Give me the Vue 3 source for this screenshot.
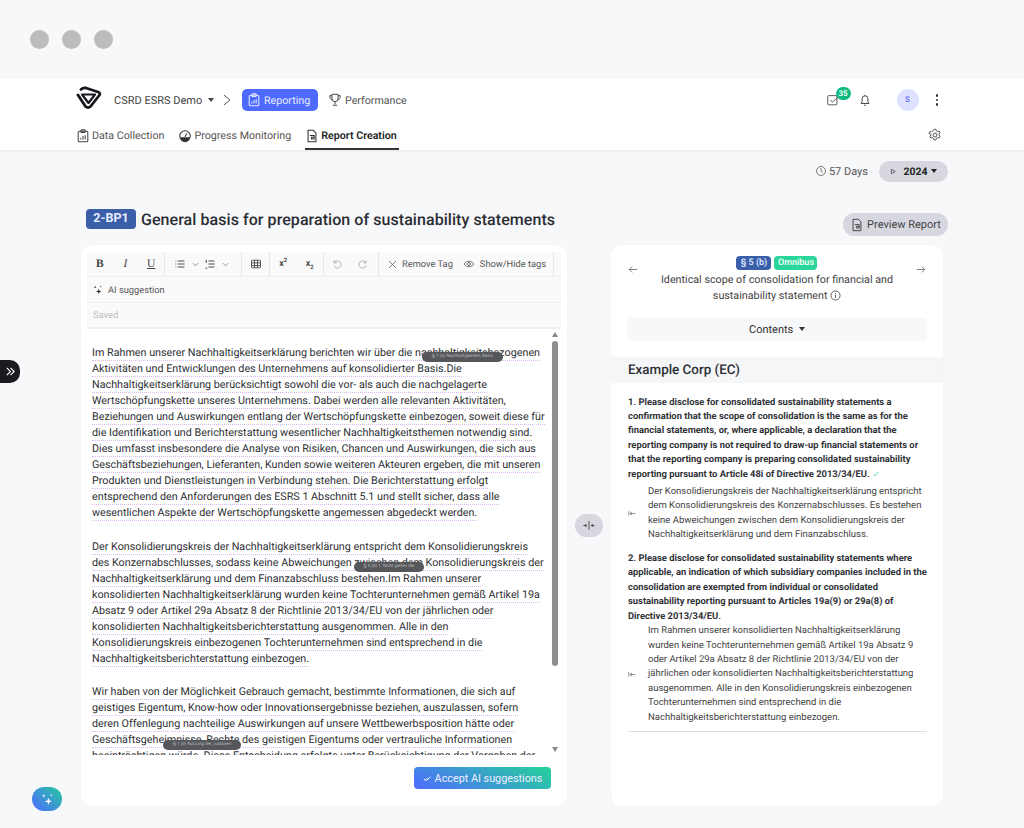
<template>
  <div class="page">
    <div class="window-bar">
      <span class="dot"></span><span class="dot"></span><span class="dot"></span>
    </div>

    <header class="header">
      <div class="nav-top">
        <svg class="logo" viewBox="0 0 26 23" fill="none" stroke="#16181d" stroke-width="2.800" stroke-linejoin="round" stroke-linecap="round">
          <path d="M2 9 L9.500 20.500 Q12 22.500 14.500 20.500 L23.500 9 Q24.500 7 22 6 L10 2 Q7 1.500 5 3.500" />
          <path d="M6 8.500 H19 L12.500 17 Z" stroke-width="2.200" />
        </svg>
        <span class="project">CSRD ESRS Demo <i class="caret"></i></span>
        <svg class="crumb" viewBox="0 0 10 14" fill="none" stroke="#555" stroke-width="1"><path d="M2 2l6 5-6 5" /></svg>
        <span class="tab-active">
          <svg class="ico" viewBox="0 0 16 16" fill="none" stroke="currentColor" stroke-width="1.200"><rect x="2.500" y="2.500" width="11" height="12" rx="1.500" /><rect x="5.500" y="1" width="5" height="3" rx="1" /><path d="M5.500 12V10M8 12V8M10.500 12V7" /></svg>
          Reporting
        </span>
        <span class="tab-plain">
          <svg class="ico" viewBox="0 0 16 16" fill="none" stroke="#444" stroke-width="1.100"><path d="M4.500 1.500h7v5a3.500 3.500 0 0 1-7 0zM8 10v3M5.500 14h5M4.500 3H2c0 3 1 4.500 2.800 5M11.500 3H14c0 3-1 4.500-2.800 5" /></svg>
          Performance
        </span>
        <div class="nav-right">
          <span class="tasks">
            <svg class="ico" viewBox="0 0 16 16" fill="none" stroke="#555" stroke-width="1.100"><rect x="2" y="3" width="10.500" height="10.500" rx="1" /><path d="M5 8l2.500 2.500L14 4" /></svg>
            <b class="count">35</b>
          </span>
          <svg class="ico bell" viewBox="0 0 16 16" fill="none" stroke="#444" stroke-width="1.100"><path d="M3.500 12h9l-1.200-2V6.500a3.300 3.300 0 0 0-6.600 0V10zM7 14h2M8 2v1" /></svg>
          <span class="avatar">S</span>
          <span class="kebab"><i></i><i></i><i></i></span>
        </div>
      </div>
      <div class="nav-sub">
        <span class="sub-item">
          <svg class="ico" viewBox="0 0 16 16" fill="none" stroke="#444" stroke-width="1.200"><rect x="2.500" y="2.500" width="11" height="12" rx="1.500" /><rect x="5.500" y="1" width="5" height="3" rx="1" /><path d="M5.500 12V10M8 12V8M10.500 12V7" /></svg>
          Data Collection
        </span>
        <span class="sub-item">
          <svg class="ico" viewBox="0 0 16 16"><circle cx="8" cy="8" r="6" fill="none" stroke="#333" stroke-width="1.200" /><path d="M2.500 9.500h11a5.500 5.500 0 0 1-11 0z" fill="#333" /><path d="M8 9L10 5" stroke="#333" stroke-width="1.200" /></svg>
          Progress Monitoring
        </span>
        <span class="sub-item current">
          <svg class="ico" viewBox="0 0 16 16" fill="none" stroke="#333" stroke-width="1.200"><path d="M3.500 1.500h6l3 3v10h-9zM5.500 7.500h5v4h-3v-2h3" /></svg>
          Report Creation
        </span>
        <svg class="ico gear" viewBox="0 0 16 16" fill="none" stroke="#555" stroke-width="1.100"><circle cx="8" cy="8" r="2.200" /><path d="M6.800 1.500h2.400l.4 1.800 1.400.8 1.800-.6 1.200 2.100-1.400 1.200v1.400l1.400 1.200-1.200 2.100-1.800-.6-1.400.8-.4 1.800H6.800l-.4-1.800-1.400-.8-1.800.6-1.200-2.100 1.400-1.200V7.200L1 6l1.200-2.100 1.800.6 1.400-.8z" /></svg>
      </div>
    </header>

    <main class="main">
      <div class="status-row">
        <svg class="ico clock" viewBox="0 0 16 16" fill="none" stroke="#555" stroke-width="1"><circle cx="8" cy="8" r="6" /><path d="M8 4v4l2.500 2" /></svg>
        <span class="days">57 Days</span>
        <span class="year-chip">
          <svg class="play" viewBox="0 0 8 8" fill="none" stroke="#555"><path d="M1.500 1.500v5l4.500-2.500z" /></svg>
          <b>2024</b><i class="caret"></i>
        </span>
      </div>

      <div class="title-row">
        <span class="code">2-BP1</span>
        <h1>General basis for preparation of sustainability statements</h1>
        <span class="preview">
          <svg class="ico" viewBox="0 0 16 16" fill="none" stroke="#444" stroke-width="1.100"><path d="M3.500 1.500h6l3 3v10h-9zM5.500 7.500h5v4h-3v-2h3" /></svg>
          Preview Report
        </span>
      </div>

      <div class="columns">
        <section class="editor">
          <div class="toolbar">
            <div class="tool-row">
              <span class="group g-format">
                <b class="cell serif">B</b><i class="cell serif">I</i><u class="cell serif">U</u>
              </span>
              <span class="group g-lists">
                <svg class="tool" viewBox="0 0 16 16" fill="none" stroke="#444" stroke-width="1.300"><path d="M5 4h9M5 8h9M5 12h9M2 4h1M2 8h1M2 12h1" /></svg>
                <svg class="chev" viewBox="0 0 8 8" fill="none" stroke="#888"><path d="M1 2.500l3 3 3-3" /></svg>
                <svg class="tool" viewBox="0 0 16 16" fill="none" stroke="#444" stroke-width="1.300"><path d="M6 4h8M6 8h8M6 12h8M3 2.500v4M2 13.500h2.500" /></svg>
                <svg class="chev" viewBox="0 0 8 8" fill="none" stroke="#888"><path d="M1 2.500l3 3 3-3" /></svg>
              </span>
              <span class="group g-table">
                <svg class="tool" viewBox="0 0 16 16" fill="none" stroke="#444" stroke-width="1.200"><rect x="2" y="3" width="12" height="10" rx="1" /><path d="M2 6.500h12M2 10h12M6 3v10M10 3v10" /></svg>
              </span>
              <span class="group g-scripts">
                <span class="sc">x<sup>2</sup></span><span class="sc">x<sub>2</sub></span>
              </span>
              <span class="group g-history">
                <span class="cell"><svg class="tool" viewBox="0 0 16 16" fill="none" stroke="#aaa" stroke-width="1.200"><path d="M4 3v3.500h3.500M4.300 6.500A4.800 4.800 0 1 1 4 10" /></svg></span>
                <span class="cell"><svg class="tool" viewBox="0 0 16 16" fill="none" stroke="#aaa" stroke-width="1.200"><path d="M12 3v3.500H8.500M11.700 6.500A4.800 4.800 0 1 0 12 10" /></svg></span>
              </span>
              <span class="group g-tags">
                <svg class="small" viewBox="0 0 12 12" fill="none" stroke="#555" stroke-width="1"><path d="M1.500 1.500l9 9M10.500 1.500l-9 9" /></svg>
                <span class="tool-text">Remove Tag</span>
                <svg class="tool eye" viewBox="0 0 16 16" fill="none" stroke="#555" stroke-width="1.100"><path d="M1.500 8c3.500-5 9.500-5 13 0-3.500 5-9.500 5-13 0z" /><circle cx="8" cy="8" r="2" /></svg>
                <span class="tool-text">Show/Hide tags</span>
              </span>
            </div>
            <div class="ai-row">
              <svg class="spark" viewBox="0 0 14 14" fill="#333"><path d="M8 5l1 3 3 1-3 1-1 3-1-3-3-1 3-1zM3 1l.6 1.600 1.400.4-1.400.6L3 5l-.6-1.400L1 3l1.400-.4zM11 1l.4 1 1 .4-1 .4-.4 1-.4-1-1-.4 1-.4z" /></svg>
              AI suggestion
            </div>
            <div class="saved-row">Saved</div>
          </div>

          <div class="text-area">
            <p v-for="(para, i) in paragraphs" :key="i" class="para">
              <span v-for="(line, j) in para" :key="j" class="line">{{ line }}</span>
            </p>
            <span class="tag tag-a">§ 1 (a) Nachhaltigkeiten, Basis</span>
            <span class="tag tag-b">§ 5 (b) 1. Nicht gelten die</span>
            <span class="tag tag-c">§ 1 (d) Nutzung der, zulassen</span>
            <div class="scrollbar">
              <i class="arrow-up"></i>
              <span class="thumb"></span>
              <i class="arrow-down"></i>
            </div>
          </div>

          <div class="editor-foot">
            <button class="accept">
              <svg viewBox="0 0 12 12" fill="none" stroke="#fff" stroke-width="1.300"><path d="M1 6.500l2 2 2.500-3M5 8.500l5-5" /></svg>
              Accept AI suggestions
            </button>
          </div>
        </section>

        <div class="splitter">
          <span class="split-btn">
            <svg viewBox="0 0 16 12" fill="none" stroke="#444" stroke-width="1"><path d="M8 1v10M1.500 6H5M3.500 4.500L5.500 6l-2 1.500M14.500 6H11M12.500 4.500L10.500 6l2 1.500" /></svg>
          </span>
        </div>

        <section class="panel">
          <div class="panel-head">
            <svg class="arrow" viewBox="0 0 12 10" fill="none" stroke="#666"><path d="M11 5H1.500M5 1.500L1.500 5 5 8.500" /></svg>
            <div class="head-mid">
              <div class="badges"><span class="b-blue">§ 5 (b)</span><span class="b-green">Omnibus</span></div>
              <p class="head-title">Identical scope of consolidation for financial and<br>sustainability statement
                <svg class="info" viewBox="0 0 12 12" fill="none" stroke="#444" stroke-width=".9"><circle cx="6" cy="6" r="5" /><path d="M6 5.200v3.600M6 3.200v1" /></svg>
              </p>
            </div>
            <svg class="arrow" viewBox="0 0 12 10" fill="none" stroke="#666"><path d="M1 5h9.500M7 1.500L10.500 5 7 8.500" /></svg>
          </div>
          <div class="contents">Contents <i class="caret"></i></div>
          <h2 class="company">Example Corp (EC)</h2>
          <div class="items">
            <p class="q">1. Please disclose for consolidated sustainability statements a confirmation that the scope of consolidation is the same as for the financial statements, or, where applicable, a declaration that the reporting company is not required to draw-up financial statements or that the reporting company is preparing consolidated sustainability reporting pursuant to Article 48i of Directive 2013/34/EU.
              <svg class="tick" viewBox="0 0 10 10" fill="none" stroke="#2fd39a"><path d="M2 5.500l2 2 4-5" /></svg>
            </p>
            <div class="answer first">
              <svg class="pull" viewBox="0 0 10 8" fill="none" stroke="#555" stroke-width=".8"><path d="M1 1v6M9 4H2.500M5 2L2.500 4 5 6" /></svg>
              <p>Der Konsolidierungskreis der Nachhaltigkeitserklärung entspricht dem Konsolidierungskreis des Konzernabschlusses. Es bestehen keine Abweichungen zwischen dem Konsolidierungskreis der Nachhaltigkeitserklärung und dem Finanzabschluss.</p>
            </div>
            <p class="q second">2. Please disclose for consolidated sustainability statements where applicable, an indication of which subsidiary companies included in the consolidation are exempted from individual or consolidated sustainability reporting pursuant to Articles 19a(9) or 29a(8) of Directive 2013/34/EU.</p>
            <div class="answer">
              <svg class="pull" viewBox="0 0 10 8" fill="none" stroke="#555" stroke-width=".8"><path d="M1 1v6M9 4H2.500M5 2L2.500 4 5 6" /></svg>
              <p>Im Rahmen unserer konsolidierten Nachhaltigkeitserklärung wurden keine Tochterunternehmen gemäß Artikel 19a Absatz 9 oder Artikel 29a Absatz 8 der Richtlinie 2013/34/EU von der jährlichen oder konsolidierten Nachhaltigkeitsberichterstattung ausgenommen. Alle in den Konsolidierungskreis einbezogenen Tochterunternehmen sind entsprechend in die Nachhaltigkeitsberichterstattung einbezogen.</p>
            </div>
            <hr class="rule" />
          </div>
        </section>
      </div>
    </main>

    <span class="side-tab">
      <svg viewBox="0 0 12 12" fill="none" stroke="#fff" stroke-width="1.200"><path d="M2 2l4 4-4 4M6 2l4 4-4 4" /></svg>
    </span>
    <span class="fab">
      <svg viewBox="0 0 14 14" fill="#fff"><path d="M8 5l1 3 3 1-3 1-1 3-1-3-3-1 3-1zM3 1l.6 1.600 1.400.4-1.400.6L3 5l-.6-1.400L1 3l1.400-.4zM11 1l.4 1 1 .4-1 .4-.4 1-.4-1-1-.4 1-.4z" /></svg>
    </span>
  </div>
</template>

<script setup>
const paragraphs = [
  [
    'Im Rahmen unserer Nachhaltigkeitserklärung berichten wir über die nachhaltigkeitsbezogenen',
    'Aktivitäten und Entwicklungen des Unternehmens auf konsolidierter Basis.Die',
    'Nachhaltigkeitserklärung berücksichtigt sowohl die vor- als auch die nachgelagerte',
    'Wertschöpfungskette unseres Unternehmens. Dabei werden alle relevanten Aktivitäten,',
    'Beziehungen und Auswirkungen entlang der Wertschöpfungskette einbezogen, soweit diese für',
    'die Identifikation und Berichterstattung wesentlicher Nachhaltigkeitsthemen notwendig sind.',
    'Dies umfasst insbesondere die Analyse von Risiken, Chancen und Auswirkungen, die sich aus',
    'Geschäftsbeziehungen, Lieferanten, Kunden sowie weiteren Akteuren ergeben, die mit unseren',
    'Produkten und Dienstleistungen in Verbindung stehen. Die Berichterstattung erfolgt',
    'entsprechend den Anforderungen des ESRS 1 Abschnitt 5.1 und stellt sicher, dass alle',
    'wesentlichen Aspekte der Wertschöpfungskette angemessen abgedeckt werden.'
  ],
  [
    'Der Konsolidierungskreis der Nachhaltigkeitserklärung entspricht dem Konsolidierungskreis',
    'des Konzernabschlusses, sodass keine Abweichungen zwischen dem Konsolidierungskreis der',
    'Nachhaltigkeitserklärung und dem Finanzabschluss bestehen.Im Rahmen unserer',
    'konsolidierten Nachhaltigkeitserklärung wurden keine Tochterunternehmen gemäß Artikel 19a',
    'Absatz 9 oder Artikel 29a Absatz 8 der Richtlinie 2013/34/EU von der jährlichen oder',
    'konsolidierten Nachhaltigkeitsberichterstattung ausgenommen. Alle in den',
    'Konsolidierungskreis einbezogenen Tochterunternehmen sind entsprechend in die',
    'Nachhaltigkeitsberichterstattung einbezogen.'
  ],
  [
    'Wir haben von der Möglichkeit Gebrauch gemacht, bestimmte Informationen, die sich auf',
    'geistiges Eigentum, Know-how oder Innovationsergebnisse beziehen, auszulassen, sofern',
    'deren Offenlegung nachteilige Auswirkungen auf unsere Wettbewerbsposition hätte oder',
    'Geschäftsgeheimnisse, Rechte des geistigen Eigentums oder vertrauliche Informationen',
    'beeinträchtigen würde. Diese Entscheidung erfolgte unter Berücksichtigung der Vorgaben der'
  ]
]
</script>

<style>
html, body { margin: 0; background: #f7f8fa; }
</style>

<style scoped>
.page {
  position: relative;
  width: 1024px;
  height: 828px;
  overflow: hidden;
  background: #f7f8fa;
  font-family: Roboto, "Liberation Sans", sans-serif;
  color: #33363b;
  text-rendering: geometricPrecision;
}
.window-bar {
  height: 78px;
  display: flex;
  align-items: center;
  gap: 13px;
  padding-left: 30px;
}
.dot { width: 19px; height: 19px; border-radius: 50%; background: #bdbdbd; }

.header {
  background: #fff;
  height: 72px;
  box-shadow: 0 1px 2px rgba(0, 0, 0, .07);
  padding: 0 76px;
  box-sizing: border-box;
}
.ico { width: 14px; height: 14px; flex: none; }
.caret {
  display: inline-block;
  width: 0;
  height: 0;
  border: 3.500px solid transparent;
  border-top: 4px solid currentColor;
  border-bottom: 0;
  vertical-align: 2px;
  margin-left: 3px;
}
.nav-top { display: flex; align-items: center; height: 44px; font-size: 10.700px; }
.logo { width: 26px; height: 23px; margin-top: -5px; flex: none; }
.project { margin-left: 12px; color: #444; font-size: 11px; }
.crumb { width: 10px; height: 14px; margin-left: 8px; }
.tab-active {
  margin-left: 10px;
  width: 76px;
  height: 22px;
  box-sizing: border-box;
  display: flex;
  align-items: center;
  gap: 3px;
  padding-left: 5px;
  background: #4f6bff;
  color: #e7ebff;
  border-radius: 5px;
}
.tab-plain { margin-left: 10px; display: flex; align-items: center; gap: 3px; color: #555; }
.nav-right { margin-left: auto; display: flex; align-items: center; margin-right: 10px; }
.tasks { position: relative; display: flex; margin-right: 18px; }
.count {
  position: absolute;
  left: 10px;
  top: -6px;
  width: 15px;
  height: 13px;
  border-radius: 7px;
  background: #10b981;
  color: #e8fff6;
  font-size: 8px;
  line-height: 13px;
  text-align: center;
}
.bell { margin-right: 25px; }
.avatar {
  width: 22px;
  height: 22px;
  border-radius: 50%;
  background: #dfe2ff;
  color: #5a6cff;
  font-size: 8px;
  font-weight: 500;
  line-height: 22px;
  text-align: center;
}
.kebab { display: flex; flex-direction: column; gap: 2px; margin-left: 17px; }
.kebab i { width: 2.500px; height: 2.500px; border-radius: 50%; background: #333; }

.nav-sub { display: flex; height: 28px; font-size: 10.700px; color: #555; gap: 14px; }
.sub-item { display: flex; align-items: flex-start; gap: 2px; height: 28px; box-sizing: border-box; padding-top: 7px; line-height: 14px; }
.sub-item.current {
  color: #1d1f23;
  font-weight: 600;
  border-bottom: 2px solid #333;
  padding: 7px 2px 0 0;
}
.gear { margin-left: auto; margin-top: 6px; margin-right: 6px; }

.main { padding: 0 81px; }
.status-row {
  height: 42px;
  display: flex;
  align-items: center;
  justify-content: flex-end;
  margin-right: -5px;
  font-size: 11px;
  color: #555;
}
.clock { width: 12px; height: 12px; margin-right: 2px; }
.days { margin-right: 11px; }
.year-chip {
  width: 69px;
  height: 21px;
  border-radius: 11px;
  background: #d6d7df;
  display: flex;
  align-items: center;
  justify-content: center;
  color: #222;
  font-size: 10.500px;
}
.play { width: 7px; height: 7px; margin-right: 6px; }
.title-row { display: flex; align-items: center; height: 53px; margin-right: -5px; padding-left: 5px; box-sizing: border-box; }
.code {
  background: #3a5ea8;
  color: #e8eeff;
  width: 50px;
  height: 20px;
  border-radius: 4px;
  font-size: 12.500px;
  font-weight: 700;
  line-height: 20px;
  text-align: center;
  margin-top: 1px;
}
h1 { font-size: 16px; font-weight: 500; color: #2b2e34; margin: 1px 0 0 5px; letter-spacing: .06px; }
.preview {
  margin-left: auto;
  width: 105px;
  height: 23px;
  box-sizing: border-box;
  border-radius: 12px;
  background: #d6d7df;
  display: flex;
  align-items: center;
  justify-content: center;
  gap: 3px;
  font-size: 11px;
  color: #444;
  margin-top: 12px;
}

.columns { display: flex; height: 561px; }
.editor {
  width: 486px;
  background: #fff;
  border-radius: 11px;
  padding: 7px 6px 0;
  box-sizing: border-box;
  display: flex;
  flex-direction: column;
  box-shadow: 0 0 2px rgba(0, 0, 0, .05);
}
.toolbar { flex: none; }
.tool-row { display: flex; align-items: center; height: 24px; background: #fafafb; border-bottom: 1px solid #eef0f2; }
.group { display: flex; align-items: center; height: 24px; box-sizing: border-box; border-right: 1px solid #e6e7ea; flex: none; }
.g-format { width: 78px; }
.g-lists { width: 77px; padding-left: 9px; }
.g-table { width: 28px; justify-content: center; }
.g-scripts { width: 54px; }
.g-history { width: 55px; }
.g-tags { width: 175px; padding-left: 9px; gap: 5px; }
.cell { width: 26px; display: flex; align-items: center; justify-content: center; color: #444; font-size: 11.500px; }
.serif { font-family: "Liberation Serif", serif; }
.tool { width: 12px; height: 12px; flex: none; }
.chev { width: 7px; height: 7px; margin: 0 5px 0 6px; }
.sc { width: 27px; text-align: center; font-size: 9px; font-weight: 600; color: #444; }
.sc sup, .sc sub { font-size: 6px; line-height: 0; }
.small { width: 9px; height: 9px; flex: none; }
.eye { margin-left: 5px; }
.tool-text { font-size: 9.300px; color: #555; white-space: nowrap; }
.ai-row { display: flex; align-items: center; gap: 5px; height: 26px; padding: 1px 0 0 6px; font-size: 9.300px; color: #555; background: #fafafb; border-bottom: 1px solid #eef0f2; box-sizing: border-box; }
.spark { width: 10px; height: 10px; }
.saved-row { height: 26px; line-height: 26px; padding-left: 6px; font-size: 9.300px; color: #bbb; background: #fafafb; border-bottom: 2px solid #eceef1; box-sizing: border-box; }

.text-area { position: relative; height: 426px; overflow: hidden; padding: 16px 0 0 5px; box-sizing: border-box; }
.para { margin: 0 0 17.500px; font-size: 10.750px; line-height: 16px; color: #2f3135; }
.line {
  display: block;
  width: fit-content;
  height: 16px;
  box-sizing: border-box;
  border-bottom: 1px dotted #ddb8ee;
  white-space: nowrap;
}
.tag {
  position: absolute;
  height: 10px;
  border-radius: 5px;
  background: #55575b;
  color: #bbb;
  font-size: 4.500px;
  line-height: 10px;
  text-align: center;
  white-space: nowrap;
  overflow: hidden;
}
.tag-a { left: 335px; top: 23px; width: 81px; }
.tag-b { left: 267px; top: 233px; width: 70px; }
.tag-c { left: 76px; top: 411px; width: 78px; }
.scrollbar {
  position: absolute;
  right: 0;
  top: 0;
  bottom: 0;
  width: 13px;
  background: #fff;
  display: flex;
  flex-direction: column;
  align-items: center;
}
.thumb { width: 6px; height: 325px; border-radius: 3px; background: #8f8f8f; margin-top: 4px; }
.arrow-up, .arrow-down { width: 0; height: 0; border: 3.500px solid transparent; }
.arrow-up { border-bottom: 5px solid #888; border-top: 0; margin-top: 3px; }
.arrow-down { border-top: 5px solid #888; border-bottom: 0; margin-top: auto; margin-bottom: 3px; }

.editor-foot { flex: 1; display: flex; justify-content: flex-end; align-items: flex-start; padding: 12px 10px 0 0; }
.accept {
  width: 137px;
  height: 22px;
  border: 0;
  border-radius: 4px;
  background: linear-gradient(30deg, #4f6bff, #25d29a);
  color: #eef;
  font-family: inherit;
  font-size: 10.800px;
  display: flex;
  align-items: center;
  justify-content: center;
  gap: 3px;
  padding: 0;
}
.accept svg { width: 9px; height: 9px; }

.splitter { width: 44px; display: flex; align-items: center; justify-content: center; }
.split-btn { width: 28px; height: 23px; border-radius: 12px; background: #d6d7df; display: flex; align-items: center; justify-content: center; }
.split-btn svg { width: 14px; height: 11px; }

.panel {
  width: 332px;
  background: #fff;
  border-radius: 11px;
  box-shadow: 0 0 2px rgba(0, 0, 0, .05);
  box-sizing: border-box;
}
.panel-head { display: flex; justify-content: space-between; padding: 11px 17px 0; align-items: flex-start; }
.arrow { width: 10px; height: 9px; margin-top: 9px; }
.head-mid { text-align: center; }
.badges { display: flex; justify-content: center; gap: 3px; }
.b-blue, .b-green { height: 14px; line-height: 14px; border-radius: 4px; font-size: 9px; font-weight: 600; }
.b-blue { width: 35px; background: #3a5ea8; color: #dfe8ff; }
.b-green { width: 43px; background: #2ad69a; color: #eefff8; }
.head-title { margin: 2px 0 0; font-size: 10.750px; line-height: 16px; color: #444; }
.info { width: 11px; height: 11px; vertical-align: -2px; }
.contents {
  margin: 14px 16px 0;
  height: 23px;
  line-height: 23px;
  background: #f7f8fa;
  border-radius: 4px;
  text-align: center;
  font-size: 11px;
  color: #333;
}
.company {
  margin: 16px 0 0;
  height: 26px;
  line-height: 28px;
  padding-left: 17px;
  background: #f5f6f8;
  font-size: 13.400px;
  font-weight: 500;
  color: #2b2e34;
}
.items { padding: 12.500px 16px 0 17px; font-size: 9.500px; line-height: 14.400px; color: #444; }
.q { margin: 0; font-weight: 700; color: #2f3237; font-size: 9.400px; }
.second { margin-top: 9.500px; }
.tick { width: 8px; height: 8px; vertical-align: -1px; }
.answer { display: flex; align-items: center; }
.answer.first { margin-top: 3px; }
.answer p { margin: 0; padding-left: 15px; }
.pull { width: 8px; height: 7px; flex: none; margin-right: -3px; }
.rule { border: 0; border-top: 1px solid #dddfe3; margin: 6px 0 0; }

.side-tab {
  position: absolute;
  left: 0;
  top: 360px;
  width: 20px;
  height: 23px;
  border-radius: 0 10px 10px 0;
  background: #1b1b1f;
  display: flex;
  align-items: center;
  justify-content: center;
}
.side-tab svg { width: 11px; height: 11px; }
.fab {
  position: absolute;
  left: 32px;
  top: 787px;
  width: 30px;
  height: 24px;
  border-radius: 12px;
  background: linear-gradient(45deg, #4f6bff, #25c8a0);
  display: flex;
  align-items: center;
  justify-content: center;
}
.fab svg { width: 13px; height: 13px; }
</style>
